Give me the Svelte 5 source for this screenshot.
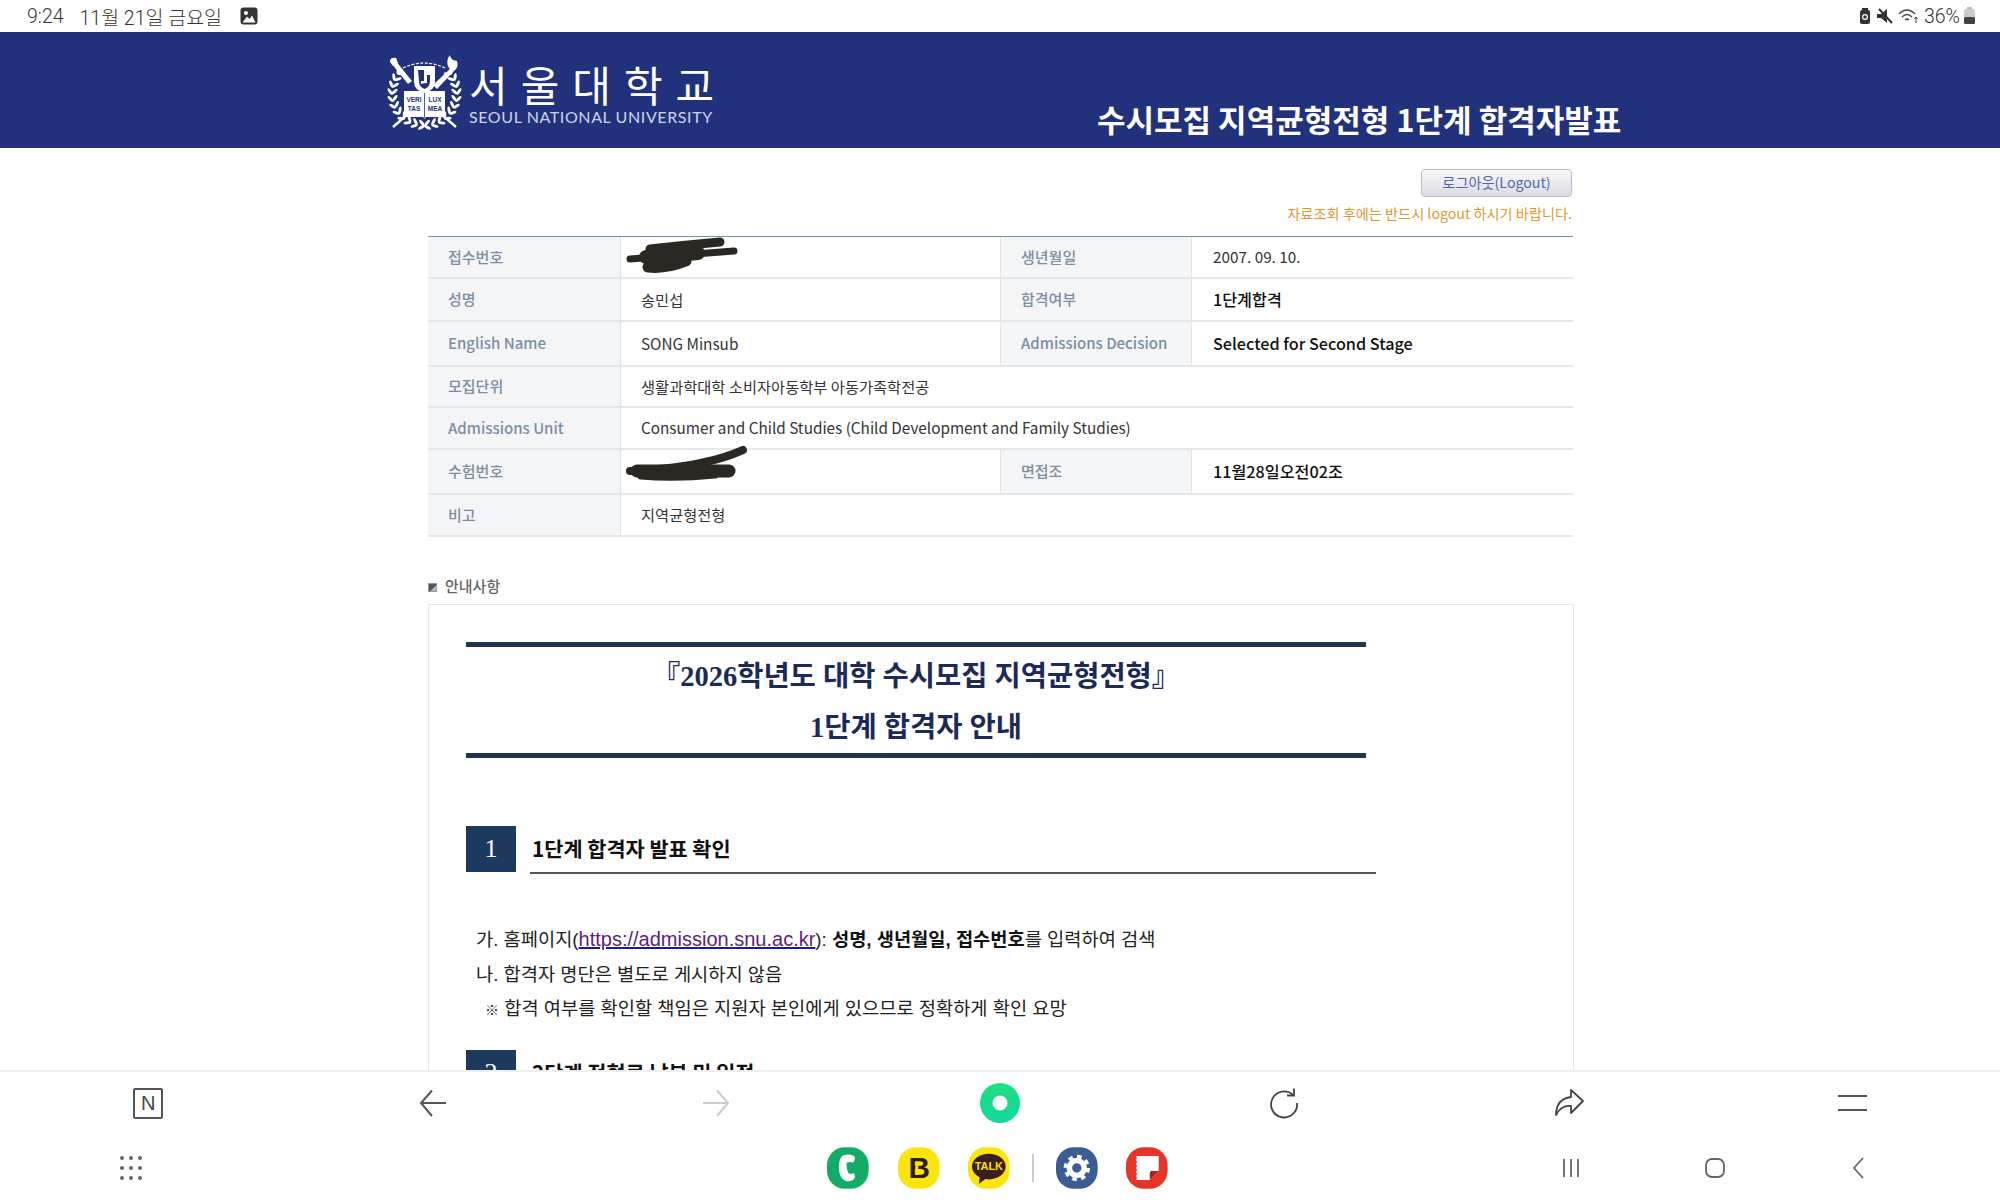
<script>
	const rows = [
		{ label: '접수번호', value: '', label2: '생년월일', value2: '2007. 09. 10.' },
		{ label: '성명', value: '송민섭', label2: '합격여부', value2: '1단계합격', strong: true },
		{ label: 'English Name', value: 'SONG Minsub', label2: 'Admissions Decision', value2: 'Selected for Second Stage', strong: true },
		{ label: '모집단위', value: '생활과학대학 소비자아동학부 아동가족학전공' },
		{ label: 'Admissions Unit', value: 'Consumer and Child Studies (Child Development and Family Studies)' },
		{ label: '수험번호', value: '', label2: '면접조', value2: '11월28일오전02조', strong: true },
		{ label: '비고', value: '지역균형전형' }
	];

	// 월계수 잎
	const leaves = [];
	for (let i = 0; i < 11; i++) {
		const deg = 50 + i * 12.5;
		const a = (deg * Math.PI) / 180;
		for (const side of [-1, 1]) {
			for (const radius of [30, 34.5]) {
				leaves.push({
					x: 37.5 + side * radius * Math.sin(a),
					y: 38 - radius * Math.cos(a),
					r: side * (deg + (radius === 30 ? 45 : 125))
				});
			}
		}
	}
</script>

<div class="screen">
	<div class="status">
		<div class="status_left">
			<span class="time">9:24</span>
			<span>11월 21일 금요일</span>
			<svg class="gallery" width="18" height="18" viewBox="0 0 18 18">
				<rect x="0.5" y="0.5" width="17" height="17" rx="3" fill="#333" />
				<circle cx="6" cy="6" r="2" fill="#fff" />
				<path d="M2.5 15.5 L7 9.5 L9.5 12 L12 8.5 L15.5 15.5 Z" fill="#fff" />
			</svg>
		</div>
		<div class="status_right">
			<svg width="14" height="18" viewBox="0 0 14 18">
				<rect x="2" y="3" width="10" height="14" rx="2" fill="#333" />
				<rect x="4" y="1" width="6" height="3" fill="#333" />
				<circle cx="7" cy="10" r="2.4" fill="none" stroke="#fff" stroke-width="1.2" />
			</svg>
			<svg width="20" height="18" viewBox="0 0 20 18">
				<path d="M2 7 H6 L12 2 V16 L6 11 H2 Z" fill="#333" />
				<path d="M4 2 L17 16" stroke="#333" stroke-width="2" />
			</svg>
			<svg width="22" height="18" viewBox="0 0 22 18" fill="none" stroke="#444" stroke-width="1.4">
				<path d="M1 7 Q9 -1 17 7" />
				<path d="M4 10 Q9 5 14 10" />
				<path d="M7 13 Q9 11 11 13" />
				<path d="M18 10 V16 M16.5 12 L18 10 L19.500 12" stroke-width="1" />
			</svg>
			<span class="pct">36%</span>
			<svg width="13" height="20" viewBox="0 0 13 20">
				<rect x="4" y="1" width="5" height="2" fill="#bbb" />
				<rect x="1" y="3" width="11" height="15" rx="1.500" fill="#ccc" />
				<rect x="1" y="11" width="11" height="7" rx="1.500" fill="#444" />
			</svg>
		</div>
	</div>

	<div class="page">
		<header class="banner">
			<div class="brand">
				<svg class="emblem" width="76" height="76" viewBox="0 0 76 76">
					{#each leaves as l}
						<ellipse cx={l.x} cy={l.y} rx="1.500" ry="3.800" fill="#fff" transform="rotate({l.r} {l.x} {l.y})" />
					{/each}
					<path d="M5 9 L8 5 L25 26 L21 29 Z" fill="#fff" />
					<path d="M3 7 Q3 2 9 3 L11 8 L6 11 Z" fill="#fff" />
					<path d="M46 30 L64 13 L67 16 L50 34 Z" fill="#fff" />
					<path d="M62 13 Q58 6 63 0 Q63 5 70 6 Q72 12 67 16 Z" fill="#fff" />
					<path d="M16 13 Q37 3 58 13" fill="none" stroke="#fff" stroke-width="1.200" stroke-dasharray="3 1.500" />
					<path d="M27 11 H48 V27 Q48 35 37.500 38 Q27 35 27 27 Z" fill="#fff" />
					<path d="M31 15 H43 V26 Q43 32 37.500 34 Q32 32 32 26 Z" fill="#22317c" />
					<path d="M37 14 H43 V20 H40 V28 Q37 28 34 29 V26 H37 Z" fill="#fff" />
					<path d="M6 72 L22 58 M69 72 L53 58" stroke="#fff" stroke-width="2.400" />
					<path d="M17 36 H36 L37.500 38 L39 36 H58 V62 H39 L37.500 64 L36 62 H17 Z" fill="#fff" />
					<text x="27" y="47" class="motto">VERI</text>
					<text x="48" y="47" class="motto">LUX</text>
					<text x="27" y="56" class="motto">TAS</text>
					<text x="48" y="56" class="motto">MEA</text>
					<path d="M37.500 38 V63" stroke="#22317c" stroke-width="0.800" />
				</svg>
				<div class="brand_text">
					<div class="brand_ko">서울대학교</div>
					<div class="brand_en">SEOUL NATIONAL UNIVERSITY</div>
				</div>
			</div>
			<h1 class="banner_title">수시모집 지역균형전형 1단계 합격자발표</h1>
		</header>

		<main class="content">
			<div class="logout_row">
				<button class="logout" type="button">로그아웃(Logout)</button>
				<p class="logout_note">자료조회 후에는 반드시 logout 하시기 바랍니다.</p>
			</div>

			<div class="info">
				{#each rows as row}
					<div class="cell head">{row.label}</div>
					{#if row.label2}
						<div class="cell val">{row.value}</div>
						<div class="cell head head2">{row.label2}</div>
						<div class="cell val val2" class:strong={row.strong}>{row.value2}</div>
					{:else}
						<div class="cell val wide">{row.value}</div>
					{/if}
				{/each}

				<svg class="scribble one" width="112" height="40" viewBox="0 0 112 40" fill="none" stroke="#2b2723" stroke-linecap="round">
					<path d="M4 22 L108 14" stroke-width="7" />
					<path d="M24 12 Q60 8 94 5" stroke-width="9" />
					<path d="M20 20 Q50 18 72 16" stroke-width="14" />
					<path d="M22 30 Q40 32 60 24" stroke-width="11" />
				</svg>
				<svg class="scribble two" width="126" height="40" viewBox="0 0 126 40" fill="none" stroke="#2b2723" stroke-linecap="round">
					<path d="M5 26 Q50 24 80 17 Q100 13 118 5" stroke-width="8" />
					<path d="M12 26 Q50 26 104 26" stroke-width="13" />
					<path d="M16 31 Q50 34 90 30" stroke-width="7" />
				</svg>
			</div>

			<div class="notice_label">
				<span class="notice_mark"></span>
				<span>안내사항</span>
			</div>

			<section class="notice">
				<div class="doc_title">
					<p>『2026학년도 대학 수시모집 지역균형전형』</p>
					<p>1단계 합격자 안내</p>
				</div>

				<div class="sec_head first">
					<span class="sec_num">1</span>
					<span class="sec_title">1단계 합격자 발표 확인</span>
				</div>

				<ul class="list">
					<li>가. 홈페이지(<a href="#top">https://admission.snu.ac.kr</a>): <b>성명, 생년월일, 접수번호</b>를 입력하여 검색</li>
					<li>나. 합격자 명단은 별도로 게시하지 않음</li>
					<li class="sub"><span class="ref">※</span> 합격 여부를 확인할 책임은 지원자 본인에게 있으므로 정확하게 확인 요망</li>
				</ul>

				<div class="sec_head">
					<span class="sec_num">2</span>
					<span class="sec_title">2단계 전형료 납부 및 일정</span>
				</div>
			</section>
		</main>
	</div>

	<nav class="bottom">
		<div class="tools">
			<div class="tool">
				<div class="n_box">N</div>
			</div>
			<div class="tool">
				<svg class="nudge" width="32" height="32" viewBox="0 0 32 32" fill="none" stroke="#555" stroke-width="2">
					<path d="M29 16 H4 M15 3.500 L4 16 L15 29" />
				</svg>
			</div>
			<div class="tool">
				<svg width="32" height="32" viewBox="0 0 32 32" fill="none" stroke="#ccc" stroke-width="2">
					<path d="M3 16 H28 M17 3.500 L28 16 L17 29" />
				</svg>
			</div>
			<div class="tool">
				<svg width="42" height="42" viewBox="0 0 42 42">
					<defs>
						<linearGradient id="ring" x1="0.500" y1="0" x2="0.500" y2="1">
							<stop offset="0" stop-color="#1ee07f" />
							<stop offset="1" stop-color="#13d6a0" />
						</linearGradient>
					</defs>
					<circle cx="21" cy="21" r="20" fill="url(#ring)" />
					<circle cx="21" cy="21" r="7.500" fill="#fff" />
				</svg>
			</div>
			<div class="tool">
				<svg width="32" height="32" viewBox="0 0 32 32" fill="none" stroke="#444" stroke-width="1.800">
					<path d="M25 8 A13 13 0 1 0 29 16" />
					<path d="M26 1.500 V8.500 H19" />
				</svg>
			</div>
			<div class="tool">
				<svg width="32" height="32" viewBox="0 0 32 32" fill="none" stroke="#444" stroke-width="1.800" stroke-linejoin="round">
					<path d="M18 3 L30 14 L18 26 V19 Q8 18 3 28 Q3 12 18 10 Z" />
				</svg>
			</div>
			<div class="tool">
				<div class="menu_lines"></div>
			</div>
		</div>

		<div class="dock">
			<div class="dots">
				{#each Array(9) as _}
					<span></span>
				{/each}
			</div>

			<div class="apps">
				<svg width="44" height="44" viewBox="0 0 44 44">
					<rect x="1" y="1" width="42" height="42" rx="18" fill="#12ab68" />
					<path d="M19 9 Q13 10 13 21 Q13 33 20 35 Q24 36 27 34 Q30 32 29 29 L28 27 Q25 28.500 23 27.500 Q20 22 21 16.500 Q24 15.500 27.500 16.500 L29 14 Q30 10 26 9 Q22 8 19 9 Z" fill="#fff" />
				</svg>
				<svg width="44" height="44" viewBox="0 0 44 44">
					<rect x="1" y="1" width="42" height="42" rx="18" fill="#fde40f" />
					<text x="22.500" y="32.500" class="bank">B</text>
					<rect x="18.500" y="16" width="3" height="13" fill="#fde40f" />
				</svg>
				<svg width="44" height="44" viewBox="0 0 44 44">
					<rect x="1" y="1" width="42" height="42" rx="18" fill="#fde40f" />
					<ellipse cx="22" cy="20.500" rx="17" ry="13" fill="#3b1e1e" />
					<path d="M13 30 L12 38 L20 32 Z" fill="#3b1e1e" />
					<text x="22" y="24.500" class="talk">TALK</text>
				</svg>
				<span class="divider"></span>
				<svg width="44" height="44" viewBox="0 0 44 44">
					<rect x="1" y="1" width="42" height="42" rx="18" fill="#3c5d94" />
					<circle cx="22" cy="22" r="7.500" fill="none" stroke="#fff" stroke-width="5.500" />
					<circle cx="22" cy="22" r="11.500" fill="none" stroke="#fff" stroke-width="3.500" stroke-dasharray="4.500 4.530" />
				</svg>
				<svg width="44" height="44" viewBox="0 0 44 44">
					<rect x="1" y="1" width="42" height="42" rx="18" fill="#e5352b" />
					<path d="M11 10 H34 V25 L25 34 H11 Q13 32 11 30 Q13 28 11 26 Q13 24 11 22 Q13 20 11 18 Q13 16 11 14 Q13 12 11 10 Z" fill="#fff" />
					<path d="M34 25 L25 34 V27 Q25 25 27 25 Z" fill="#a8231c" />
				</svg>
			</div>

			<div class="sysnav">
				<svg width="24" height="24" viewBox="0 0 24 24" stroke="#666" stroke-width="1.800">
					<path d="M5 3 V21 M12 3 V21 M19 3 V21" />
				</svg>
				<svg width="24" height="24" viewBox="0 0 24 24" fill="none" stroke="#666" stroke-width="1.800">
					<rect x="3" y="3" width="18" height="18" rx="6" />
				</svg>
				<svg width="24" height="24" viewBox="0 0 24 24" fill="none" stroke="#666" stroke-width="1.800">
					<path d="M16 2 L7 12 L16 22" />
				</svg>
			</div>
		</div>
	</nav>
</div>

<style>
	:global(body) {
		margin: 0;
		background: #fff;
	}

	.screen {
		width: 2000px;
		height: 1200px;
		display: flex;
		flex-direction: column;
		overflow: hidden;
		font-family: 'Noto Sans CJK KR', 'Noto Sans', sans-serif;
		color: #222;
	}

	.status {
		height: 32px;
		flex: none;
		display: flex;
		justify-content: space-between;
		align-items: center;
		padding: 0 24px 0 27px;
		font-family: Roboto, 'Noto Sans CJK KR', sans-serif;
		font-size: 19.500px;
		font-weight: 300;
		color: #333;
	}

	.status_left {
		display: flex;
		align-items: center;
		gap: 16px;
	}

	.gallery {
		margin-left: 2px;
	}

	.status_right {
		display: flex;
		align-items: center;
		gap: 3px;
	}

	.pct {
		margin-left: 1px;
	}

	.page {
		flex: 1;
		min-height: 0;
		overflow: hidden;
	}

	.banner {
		height: 116px;
		background: #22317c;
		box-sizing: border-box;
		padding-left: 387px;
		display: flex;
		align-items: flex-end;
	}

	.brand {
		width: 710px;
		height: 116px;
		flex: none;
		display: flex;
		padding-top: 23px;
		box-sizing: border-box;
		color: #fff;
	}

	.motto {
		font-family: 'Liberation Sans', sans-serif;
		font-size: 6.500px;
		font-weight: 700;
		text-anchor: middle;
		fill: #22317c;
	}

	.brand_text {
		margin-left: 6px;
		padding-top: 6px;
	}

	.brand_ko {
		font-size: 42px;
		font-weight: 400;
		letter-spacing: 13px;
		line-height: 46px;
		white-space: nowrap;
	}

	.brand_en {
		font-family: Lato, sans-serif;
		font-size: 16px;
		line-height: 20px;
		letter-spacing: 0.600px;
		color: #cfd4ea;
		white-space: nowrap;
	}

	.banner_title {
		margin: 0 0 7px;
		font-size: 31px;
		font-weight: 700;
		line-height: 44px;
		color: #fff;
		white-space: nowrap;
	}

	.content {
		margin-left: 428px;
		width: 1146px;
	}

	.logout_row {
		display: flex;
		flex-direction: column;
		align-items: flex-end;
		padding: 21px 2px 0 0;
		height: 67px;
	}

	.logout {
		width: 151px;
		height: 28px;
		padding: 0 0 3px;
		border: 1px solid #b9bcc4;
		border-radius: 4px;
		background: linear-gradient(#f8f8fa, #dcdde3);
		font-family: inherit;
		font-size: 14.200px;
		color: #5566a8;
	}

	.logout_note {
		margin: 5px 0 0;
		font-size: 14.200px;
		line-height: 22px;
		color: #db9a2e;
	}

	.info {
		position: relative;
		display: grid;
		grid-template-columns: 193px 379px 192px 1fr;
		grid-template-rows: 42px 43px 45px 41px 42px 45px 42px;
		width: 1145px;
		border-top: 1px solid #6f98a5;
		font-size: 15.300px;
	}

	.cell {
		display: flex;
		align-items: center;
		box-sizing: border-box;
		border-bottom: 2px solid #e4e6e8;
		padding-bottom: 2px;
		white-space: nowrap;
	}

	.head {
		padding-left: 20px;
		background: #f4f5f6;
		color: #7b8ea3;
		font-size: 15px;
		font-weight: 500;
		border-right: 1px solid #e0e3e6;
	}

	.head2 {
		border-left: 1px solid #e0e3e6;
	}

	.val {
		padding-left: 20px;
		color: #333;
	}

	.val2 {
		padding-left: 21px;
	}

	.strong {
		font-weight: 500;
		color: #111;
		font-size: 16.200px;
	}

	.wide {
		grid-column: 2 / 5;
	}

	.scribble {
		position: absolute;
	}

	.one {
		left: 198px;
		top: 0;
	}

	.two {
		left: 197px;
		top: 208px;
	}

	.notice_label {
		display: flex;
		align-items: center;
		gap: 8px;
		height: 67px;
		box-sizing: border-box;
		padding-top: 30px;
		font-size: 15px;
		font-weight: 500;
		color: #666;
	}

	.notice_mark {
		width: 9px;
		height: 9px;
		background: linear-gradient(135deg, #555 60%, #bbb 60%);
		border: 1px solid #999;
		box-sizing: border-box;
		margin-top: 3px;
	}

	.notice {
		border: 1px solid #e6e6e6;
		padding: 37px 0 0 37px;
		height: 600px;
		box-sizing: border-box;
	}

	.doc_title {
		width: 900px;
		height: 116px;
		box-sizing: border-box;
		border-top: 5px solid #1f3552;
		border-bottom: 5px solid #1f3552;
		padding-top: 4px;
		text-align: center;
		font-family: 'Liberation Serif', 'Noto Sans CJK KR', serif;
		font-size: 28.500px;
		font-weight: 700;
		color: #1c2a58;
	}

	.doc_title p {
		margin: 0;
		line-height: 51px;
	}

	.sec_head {
		position: relative;
		display: flex;
		align-items: flex-start;
		width: 910px;
		height: 46px;
	}

	.sec_head.first {
		margin-top: 68px;
	}

	.sec_num {
		width: 50px;
		height: 46px;
		flex: none;
		display: flex;
		align-items: center;
		justify-content: center;
		background: #1c3a5e;
		color: #fff;
		font-family: 'Liberation Serif', serif;
		font-size: 26px;
	}

	.sec_title {
		flex: 1;
		height: 48px;
		line-height: 44px;
		box-sizing: border-box;
		border-bottom: 2px solid #555;
		margin-left: 14px;
		padding-left: 2px;
		font-size: 20.800px;
		font-weight: 700;
		color: #111;
	}

	.list {
		list-style: none;
		margin: 50px 0 0;
		padding: 0 0 0 10px;
		font-family: 'Liberation Sans', 'Noto Sans CJK KR', sans-serif;
		font-size: 18.700px;
		line-height: 34.500px;
		color: #222;
	}

	.list a {
		font-size: 20px;
		color: #5b1e83;
		text-decoration-color: #1a1a9c;
	}

	.list b {
		color: #111;
	}

	.sub {
		padding-left: 9px;
	}

	.ref {
		font-size: 14px;
	}

	.list + .sec_head {
		margin-top: 22px;
	}

	.bottom {
		height: 130px;
		flex: none;
		background: #fff;
		border-top: 2px solid #eeeeee;
		box-sizing: border-box;
		position: relative;
	}

	.tools {
		display: grid;
		grid-template-columns: repeat(7, 1fr);
		padding: 0 5px;
		height: 62px;
	}

	.tool {
		display: flex;
		align-items: center;
		justify-content: center;
	}

	.nudge {
		margin-left: 3px;
	}

	.n_box {
		width: 30px;
		height: 31px;
		margin-left: 2px;
		box-sizing: border-box;
		border: 2px solid #555;
		border-radius: 2px;
		text-align: center;
		font-family: 'Liberation Sans', sans-serif;
		font-size: 20px;
		line-height: 27px;
		color: #444;
	}

	.menu_lines {
		width: 29px;
		height: 12px;
		border-top: 2px solid #555;
		border-bottom: 2px solid #555;
	}

	.dock {
		display: grid;
		grid-template-columns: 826px 343px 1fr;
		align-items: center;
		height: 66px;
		box-sizing: border-box;
		padding-top: 2px;
	}

	.dots {
		display: grid;
		grid-template-columns: repeat(3, 4px);
		gap: 6px 5px;
		margin-left: 120px;
	}

	.dots span {
		width: 4px;
		height: 4px;
		border-radius: 50%;
		background: #666;
	}

	.apps {
		display: flex;
		align-items: center;
		gap: 27px;
	}

	.bank {
		font-family: 'Liberation Sans', sans-serif;
		font-size: 30px;
		font-weight: 700;
		text-anchor: middle;
		fill: #2a2016;
	}

	.talk {
		font-family: 'Liberation Sans', sans-serif;
		font-size: 11px;
		font-weight: 700;
		text-anchor: middle;
		fill: #fde40f;
	}

	.divider {
		width: 2px;
		height: 28px;
		margin: 0 -6px;
		background: #ccc;
	}

	.sysnav {
		display: flex;
		gap: 120px;
		padding-left: 390px;
	}
</style>
